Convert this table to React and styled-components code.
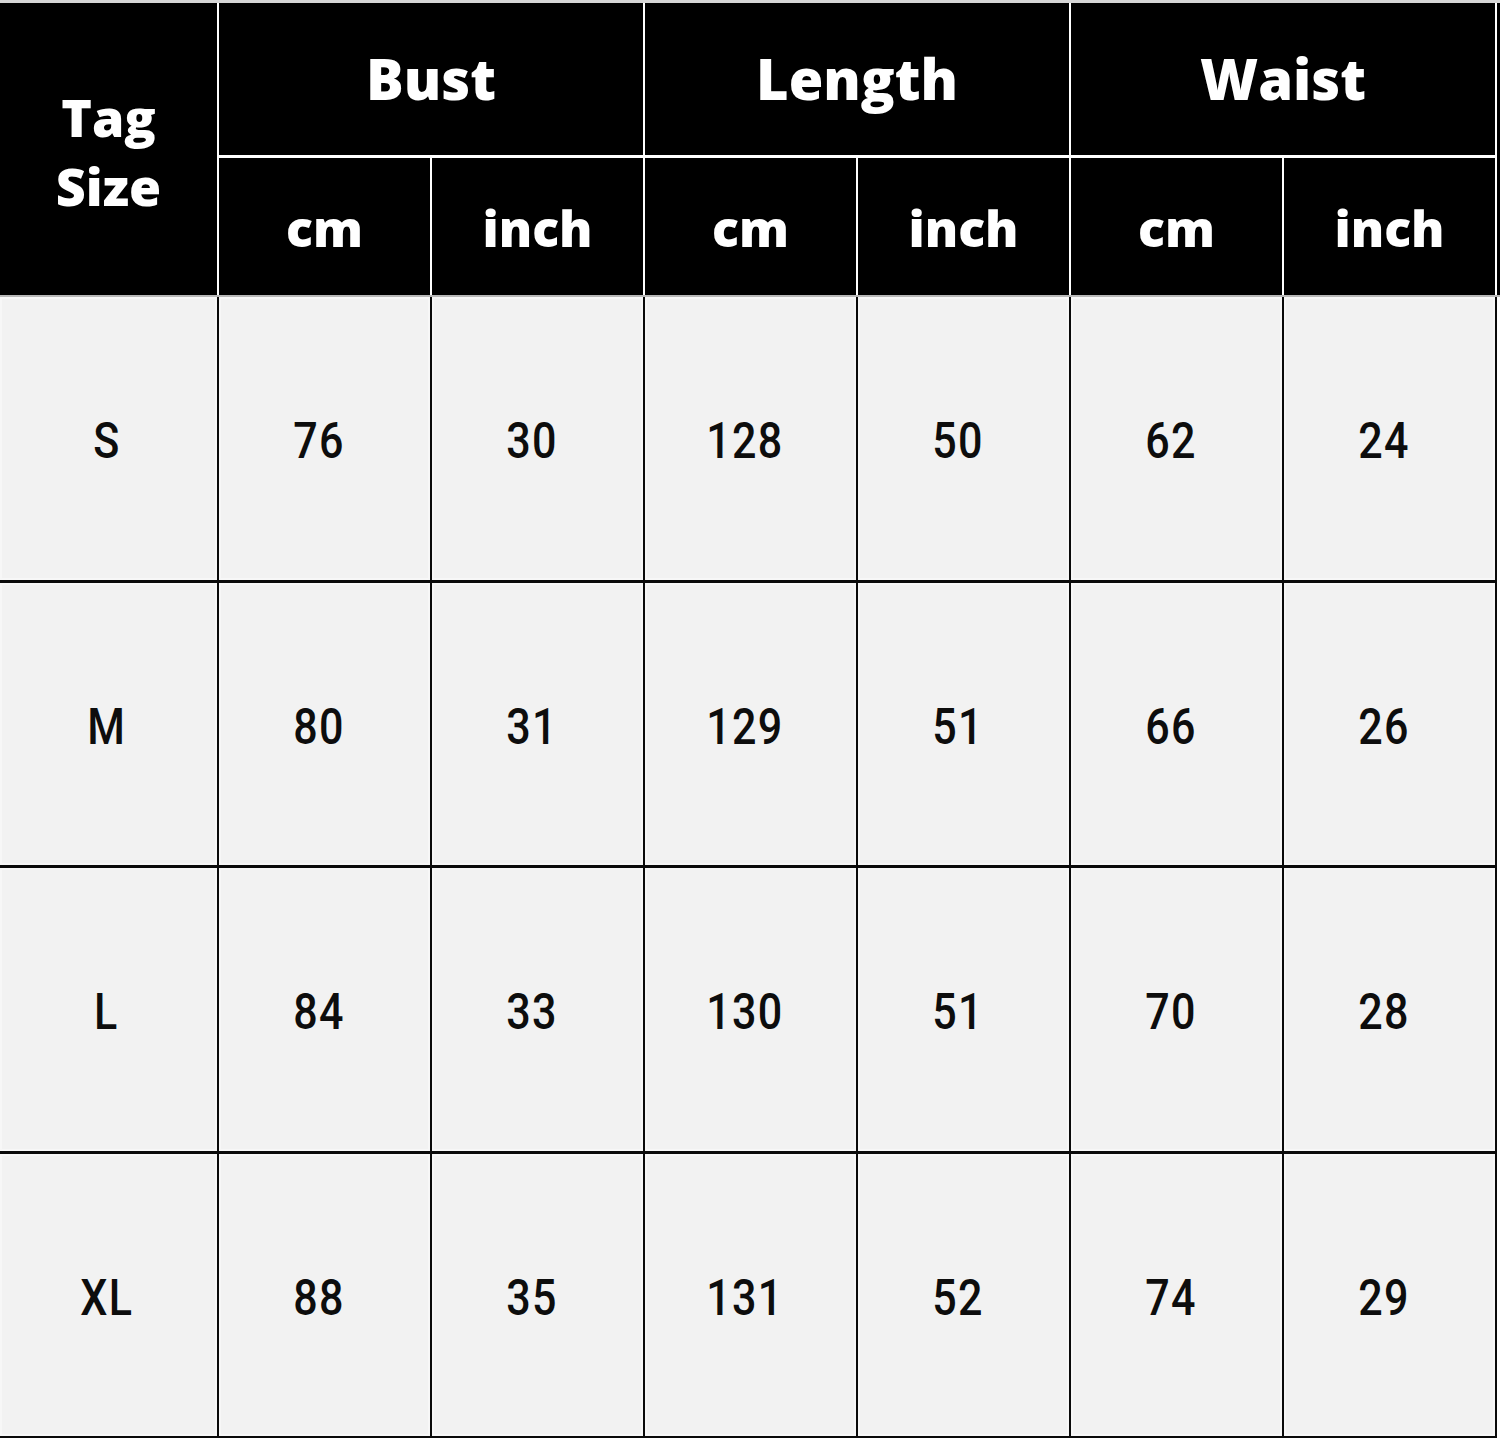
import React from "react";
import styled, { createGlobalStyle } from "styled-components";

const GlobalStyle = createGlobalStyle`
  html, body {
    margin: 0;
    padding: 0;
    background: #ffffff;
  }
`;

// sheet wrapper
const Sheet = styled.div`
  width: 1500px;
  height: 1438px;
  overflow: hidden;
  border-top: 3px solid #d6d6d6;
  box-sizing: border-box;
  background: #ffffff;
`;

// header grid, white rules show through the gaps
const HeadGrid = styled.div`
  display: grid;
  grid-template-columns: 217px repeat(6, 211px) 3px;
  grid-template-rows: 152px 137px;
  column-gap: 2px;
  row-gap: 3px;
  background: #ffffff;
  border-bottom: 2px solid #b8b8b8;
`;

const HeadCell = styled.div`
  background: #000000;
  color: #ffffff;
  display: flex;
  align-items: center;
  justify-content: center;
  text-align: center;
  font-family: "Open Sans", "Noto Sans", "DejaVu Sans", sans-serif;
  font-weight: 800;
  font-size: ${(p) => p.$size || 56}px;
  line-height: ${(p) => p.$lh || 1.2};
  grid-column: ${(p) => p.$col || "auto"};
  grid-row: ${(p) => p.$row || "auto"};
  padding-top: ${(p) => p.$pt || 0}px;
  box-sizing: border-box;
`;

const Filler = styled.div`
  background: #000000;
  grid-column: 8;
  grid-row: 1 / span 2;
`;

// body grid, black rules
const BodyGrid = styled.div`
  display: grid;
  width: 1497px;
  height: 1142px;
  box-sizing: border-box;
  grid-template-columns: 217px repeat(6, 211px);
  grid-template-rows: repeat(4, 1fr);
  column-gap: 2px;
  row-gap: 3px;
  background: #0a0a0a;
  border-right: 2px solid #0a0a0a;
  border-bottom: 3px solid #0a0a0a;
`;

const Cell = styled.div`
  background: #f2f2f2;
  box-shadow: inset 0 0 0 2px #f7f7f7;
  display: flex;
  align-items: center;
  justify-content: center;
  padding-right: ${(p) => (p.$first ? 4 : 12)}px;
  padding-top: 6px;
  box-sizing: border-box;
  color: #0d0d0d;
  font-family: Roboto, "Liberation Sans", sans-serif;
  font-size: 50px;
  font-weight: 500;
`;

// narrow the digits to get the DIN look
const Num = styled.span`
  display: inline-block;
  transform: scaleX(0.86);
  letter-spacing: 1.5px;
`;

const groups = ["Bust", "Length", "Waist"];

const rows = [
  ["S", 76, 30, 128, 50, 62, 24],
  ["M", 80, 31, 129, 51, 66, 26],
  ["L", 84, 33, 130, 51, 70, 28],
  ["XL", 88, 35, 131, 52, 74, 29],
];

export default function App() {
  return (
    <>
      <GlobalStyle />
      <Sheet>
        <HeadGrid>
          <HeadCell $col="1" $row="1 / span 2" $size={52} $lh={1.33} $pt={4}>
            Tag
            <br />
            Size
          </HeadCell>
          {groups.map((g, i) => (
            <HeadCell key={g} $col={`${2 + i * 2} / span 2`} $row="1" $size={56} $pt={0}>
              {g}
            </HeadCell>
          ))}
          {groups.map((g, i) => (
            <React.Fragment key={g + "u"}>
              <HeadCell $col={`${2 + i * 2}`} $row="2" $size={50} $pt={2}>
                cm
              </HeadCell>
              <HeadCell $col={`${3 + i * 2}`} $row="2" $size={50} $pt={2}>
                inch
              </HeadCell>
            </React.Fragment>
          ))}
          <Filler />
        </HeadGrid>
        <BodyGrid>
          {rows.map((r) =>
            r.map((v, j) => (
              <Cell key={r[0] + j} $first={j === 0}>
                <Num>{v}</Num>
              </Cell>
            ))
          )}
        </BodyGrid>
      </Sheet>
    </>
  );
}
